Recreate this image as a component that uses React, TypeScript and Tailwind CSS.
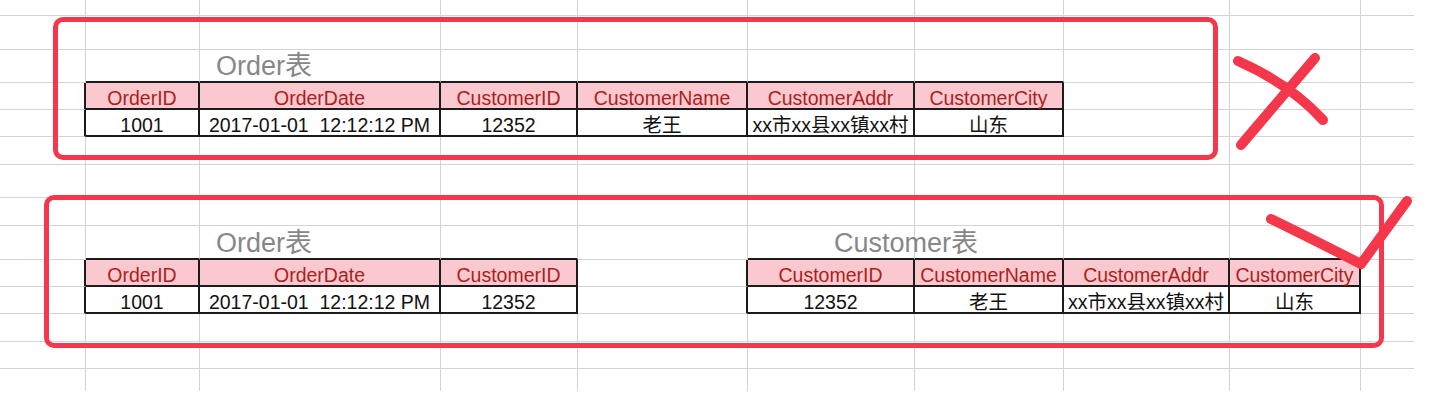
import React from "react";

type Kind = "title" | "head" | "data";
type Cell = { text: string; kind: Kind; pad?: string };

// spreadsheet geometry
const COLS = 10;
const ROWS = 14;

const tables = [
  { r0: 3, r1: 4, c0: 1, c1: 6 },
  { r0: 9, r1: 10, c0: 1, c1: 3 },
  { r0: 9, r1: 10, c0: 5, c1: 8 },
];

const inTable = (r: number, c: number) =>
  tables.some((t) => r >= t.r0 && r <= t.r1 && c >= t.c0 && c <= t.c1);

const date = "2017-01-01  12:12:12 PM";
const addr = "xx市xx县xx镇xx村";

const cells: Record<string, Cell> = {
  "2-2": { text: "Order表", kind: "title", pad: "pl-[16px]" },
  "3-1": { text: "OrderID", kind: "head" },
  "3-2": { text: "OrderDate", kind: "head" },
  "3-3": { text: "CustomerID", kind: "head" },
  "3-4": { text: "CustomerName", kind: "head" },
  "3-5": { text: "CustomerAddr", kind: "head" },
  "3-6": { text: "CustomerCity", kind: "head" },
  "4-1": { text: "1001", kind: "data" },
  "4-2": { text: date, kind: "data" },
  "4-3": { text: "12352", kind: "data" },
  "4-4": { text: "老王", kind: "data" },
  "4-5": { text: addr, kind: "data" },
  "4-6": { text: "山东", kind: "data" },

  "8-2": { text: "Order表", kind: "title", pad: "pl-[16px]" },
  "8-5": { text: "Customer表", kind: "title", pad: "pl-[86px]" },
  "9-1": { text: "OrderID", kind: "head" },
  "9-2": { text: "OrderDate", kind: "head" },
  "9-3": { text: "CustomerID", kind: "head" },
  "9-5": { text: "CustomerID", kind: "head" },
  "9-6": { text: "CustomerName", kind: "head" },
  "9-7": { text: "CustomerAddr", kind: "head" },
  "9-8": { text: "CustomerCity", kind: "head" },
  "10-1": { text: "1001", kind: "data" },
  "10-2": { text: date, kind: "data" },
  "10-3": { text: "12352", kind: "data" },
  "10-5": { text: "12352", kind: "data" },
  "10-6": { text: "老王", kind: "data" },
  "10-7": { text: addr, kind: "data" },
  "10-8": { text: "山东", kind: "data" },
};

function SheetCell({ r, c }: { r: number; c: number }) {
  const cell = cells[`${r}-${c}`];
  const table = inTable(r, c);
  const blackRight = table || inTable(r, c + 1);
  const blackBottom = table || inTable(r + 1, c);

  const right =
    c === COLS - 1 ? "" : blackRight ? "border-r-2 border-r-[#1b1b1b]" : "border-r border-r-[#d3d3d3]";
  const bottom =
    r === ROWS - 1 ? "" : blackBottom ? "border-b-2 border-b-[#1b1b1b]" : "border-b border-b-[#d3d3d3]";
  const fill = table && cell?.kind === "head" ? "bg-[#fcc8d0]" : "";

  let content = null;
  if (cell?.kind === "title") {
    content = (
      <span className={`${cell.pad} pb-[1px] whitespace-nowrap text-[27px] leading-none text-[#878787]`}>
        {cell.text}
      </span>
    );
  } else if (cell) {
    content = (
      <span
        className={`w-full whitespace-pre text-center text-[19.5px] leading-none ${
          cell.kind === "head" ? "text-[#ab1f1a]" : "text-[#111]"
        }`}
      >
        {cell.text}
      </span>
    );
  }

  return <div className={`flex min-w-0 items-end overflow-visible ${right} ${bottom} ${fill}`}>{content}</div>;
}

export default function App() {
  return (
    <div className="relative h-[397px] w-[1434px] overflow-hidden bg-white font-['Liberation_Sans','Noto_Sans_CJK_SC',sans-serif]">
      <div className="grid w-[1414px] grid-cols-[86px_114px_241px_137px_170px_167px_149px_166px_131px_53px] grid-rows-[16px_34px_33px_27px_27px_28px_33px_28px_34px_27px_27px_28px_27px_22px]">
        {Array.from({ length: ROWS }).map((_, r) =>
          Array.from({ length: COLS }).map((_, c) => <SheetCell key={`${r}-${c}`} r={r} c={c} />)
        )}
      </div>

      {/* hand-drawn annotations */}
      <div className="pointer-events-none absolute left-[53px] top-[17px] h-[143px] w-[1165px] rounded-[10px] border-[5px] border-[#f5374b]" />
      <div className="pointer-events-none absolute left-[44px] top-[195px] h-[153px] w-[1340px] rounded-[10px] border-[5px] border-[#f5374b]" />
      <svg className="pointer-events-none absolute left-0 top-0" width="1434" height="397" viewBox="0 0 1434 397" fill="none">
        <g stroke="#f5374b" strokeWidth="10" strokeLinecap="round" strokeLinejoin="round">
          <path d="M1238 61 Q1290 84 1323 120" />
          <path d="M1315 58 L1241 145" />
          <path d="M1271 219 Q1312 239 1361 264 L1407 201" />
        </g>
      </svg>
    </div>
  );
}
